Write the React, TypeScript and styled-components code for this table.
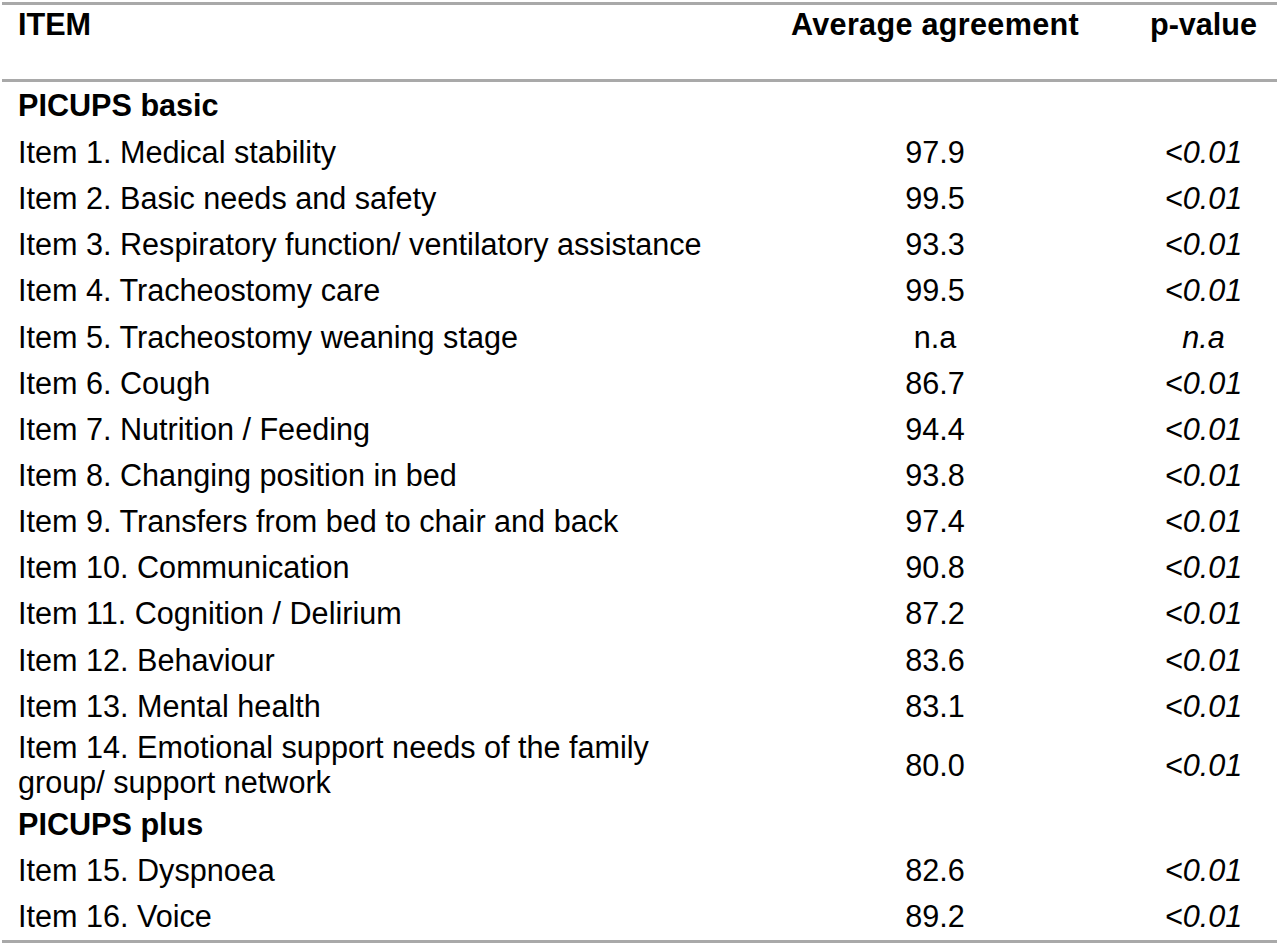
import React from "react";
import styled, { createGlobalStyle } from "styled-components";

const GlobalStyle = createGlobalStyle`
  html, body {
    margin: 0;
    padding: 0;
    background: #ffffff;
  }
  body {
    font-family: "Liberation Sans", Arial, sans-serif;
    color: #000000;
  }
`;

const Page = styled.div`
  width: 1280px;
  height: 945px;
  padding-top: 2px;
  box-sizing: border-box;
  background: #ffffff;
`;

const Table = styled.div`
  width: 1275px;
  margin-left: 2px;
  border-top: 3px solid #a9a9a9;
  border-bottom: 3px solid #a9a9a9;
  font-size: 30.6px;
  line-height: 35px;
`;

const Row = styled.div<{ $height: number; $head?: boolean }>`
  display: grid;
  grid-template-columns: 738px 390px 147px;
  height: ${(p) => p.$height}px;
  align-items: ${(p) => (p.$head ? "start" : "center")};
  padding-top: ${(p) => (p.$head ? "2px" : "0")};
  box-sizing: border-box;
  border-bottom: ${(p) => (p.$head ? "3px solid #a9a9a9" : "none")};
  font-weight: ${(p) => (p.$head ? 700 : 400)};
`;

const Label = styled.div<{ $bold?: boolean }>`
  padding-left: 16px;
  font-weight: ${(p) => (p.$bold ? 700 : "inherit")};
  white-space: nowrap;
`;

const Num = styled.div`
  text-align: center;
`;

const HeadNum = styled(Num)`
  letter-spacing: 0.3px;
`;

const PVal = styled.div<{ $italic?: boolean }>`
  text-align: center;
  font-style: ${(p) => (p.$italic ? "italic" : "normal")};
`;

type Item = { label: React.ReactNode; avg: string; p: string; tall?: boolean };

const basic: Item[] = [
  { label: "Item 1. Medical stability", avg: "97.9", p: "<0.01" },
  { label: "Item 2. Basic needs and safety", avg: "99.5", p: "<0.01" },
  { label: "Item 3. Respiratory function/ ventilatory assistance", avg: "93.3", p: "<0.01" },
  { label: "Item 4. Tracheostomy care", avg: "99.5", p: "<0.01" },
  { label: "Item 5. Tracheostomy weaning stage", avg: "n.a", p: "n.a" },
  { label: "Item 6. Cough", avg: "86.7", p: "<0.01" },
  { label: "Item 7. Nutrition / Feeding", avg: "94.4", p: "<0.01" },
  { label: "Item 8. Changing position in bed", avg: "93.8", p: "<0.01" },
  { label: "Item 9. Transfers from bed to chair and back", avg: "97.4", p: "<0.01" },
  { label: "Item 10. Communication", avg: "90.8", p: "<0.01" },
  { label: "Item 11. Cognition / Delirium", avg: "87.2", p: "<0.01" },
  { label: "Item 12. Behaviour", avg: "83.6", p: "<0.01" },
  { label: "Item 13. Mental health", avg: "83.1", p: "<0.01" },
  {
    label: (
      <>
        Item 14. Emotional support needs of the family
        <br />
        group/ support network
      </>
    ),
    avg: "80.0",
    p: "<0.01",
    tall: true,
  },
];

const plus: Item[] = [
  { label: "Item 15. Dyspnoea", avg: "82.6", p: "<0.01" },
  { label: "Item 16. Voice", avg: "89.2", p: "<0.01" },
];

const ROW = 46.15;

const ItemRow = ({ item }: { item: Item }) => (
  <Row $height={item.tall ? 72 : ROW}>
    <Label>{item.label}</Label>
    <Num>{item.avg}</Num>
    <PVal $italic>{item.p}</PVal>
  </Row>
);

export default function App() {
  return (
    <Page>
      <GlobalStyle />
      <Table>
        <Row $height={76.5} $head>
          <Label>ITEM</Label>
          <HeadNum>Average agreement</HeadNum>
          <PVal>p-value</PVal>
        </Row>
        <Row $height={48}>
          <Label $bold>PICUPS basic</Label>
        </Row>
        {basic.map((it, i) => (
          <ItemRow key={i} item={it} />
        ))}
        <Row $height={ROW}>
          <Label $bold>PICUPS plus</Label>
        </Row>
        {plus.map((it, i) => (
          <ItemRow key={i} item={it} />
        ))}
      </Table>
    </Page>
  );
}
